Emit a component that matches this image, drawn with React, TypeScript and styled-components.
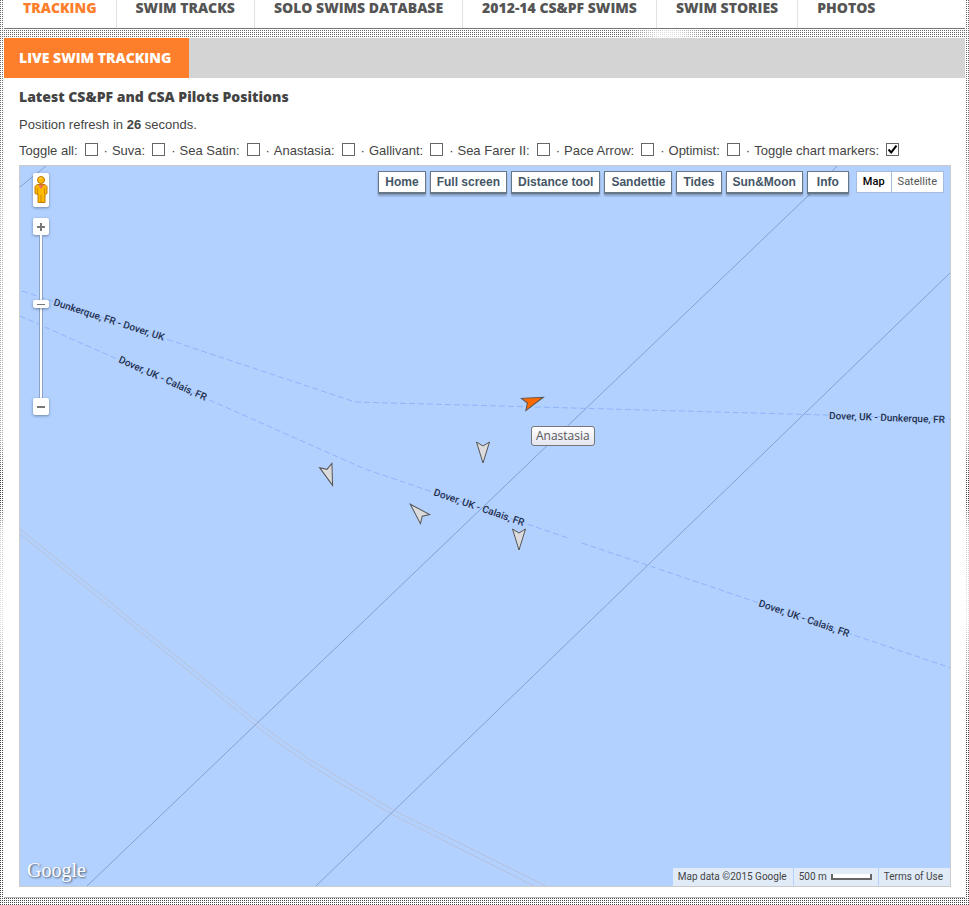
import React from "react";
import styled, { createGlobalStyle, css } from "styled-components";

const arial = `"Liberation Sans", Arial, sans-serif`;
const openSans = `"Open Sans", "Noto Sans", sans-serif`;
const roboto = `Roboto, Arial, sans-serif`;

const GlobalStyle = createGlobalStyle`
  *, *::before, *::after { box-sizing: border-box; }
  body {
    margin: 0;
    color: #444;
    font: 13px/20px ${arial};
    background-color: #fff;
    background-image:
      linear-gradient(90deg, transparent 1px, #fff 1px),
      linear-gradient(transparent 1px, #fff 1px),
      radial-gradient(40px 12px at 69% 34px, #ddd 30%, transparent),
      linear-gradient(#666 0, #777 150px, #bbb 210px, #aaa 440px, #444 480px, #444 500px, #ccc 530px, #e4e4e4 620px, #777 690px, #444 730px);
    background-size: 2px 2px, 2px 2px, 100% 100%, 100% 100%;
  }
`;

const Page = styled.div`
  min-height: 100vh;
  padding: 0 4px 7px;
`;

const Nav = styled.nav`
  display: flex;
  height: 29px;
  background: #fff;
  border-bottom: 1px solid #777;
`;

const NavLink = styled.a<{ $active?: boolean }>`
  padding: 0 19px;
  border-right: 1px solid #e2e2e2;
  color: ${(p) => (p.$active ? "#fd7e2b" : "#555")};
  font: 800 14px/16px ${openSans};
  text-decoration: none;
  white-space: nowrap;
  &:last-child { border-right: 0; }
`;

const Panel = styled.main`
  margin-top: 9px;
  padding-bottom: 10px;
  background: #fff;
  border-bottom: 1px solid #bbb;
`;

const TitleBar = styled.div`
  display: flex;
  background: #d4d4d4;
`;

const Title = styled.h1`
  margin: 0;
  padding: 0 18px 0 15px;
  background: #fd7e2b;
  color: #fff;
  font: 800 14px/40px ${openSans};
`;

const Content = styled.div`
  padding: 9px 14px 0 15px;
`;

const Heading = styled.h2`
  margin: 0;
  font: 800 14px/20px ${openSans};
`;

const Refresh = styled.p`
  margin: 8px 0 6px;
`;

const Toggles = styled.div`
  display: flex;
  padding-bottom: 4px;
  white-space: nowrap;
  height: 24px;
`;

const Toggle = styled.label`
  display: flex;
  align-items: center;
  & + &::before { content: "·"; margin: 0 4px 0 6px; }
`;

const Check = styled.input`
  appearance: none;
  width: 13px;
  height: 13px;
  margin: 0 0 4px 7px;
  border: 1px solid #666;
  background: #fff;
  &:checked {
    background: #fff url("data:image/svg+xml,%3Csvg xmlns='http://www.w3.org/2000/svg' viewBox='0 0 11 11'%3E%3Cpath d='M1.5 5.5 4.2 8.4 9.5 1.6' fill='none' stroke='%23000' stroke-width='2'/%3E%3C/svg%3E") center / 11px 11px no-repeat;
  }
`;

const MapFrame = styled.section`
  position: relative;
  height: calc(100vh - 183px);
  min-height: 420px;
  border: 1px solid #ccc;
  background: #b3d1ff;
  overflow: hidden;
`;

const Chart = styled.svg`
  position: absolute;
  top: 0;
  left: 0;
  display: block;
`;

const MapButtons = styled.div`
  position: absolute;
  top: 5px;
  right: 6px;
  display: flex;
  gap: 4px;
  align-items: flex-start;
`;

const MapButton = styled.button`
  min-width: 42px;
  height: 23px;
  padding: 0 6px;
  border: 1px solid #678;
  border-bottom-width: 2px;
  background: #fff;
  box-shadow: 0 2px 2px #0004;
  color: #445566;
  font: bold 12px/18px ${arial};
  white-space: nowrap;
`;

const MapTypes = styled.div`
  display: flex;
  margin-left: 3px;
`;

const MapType = styled.button<{ $active?: boolean }>`
  height: 22px;
  padding: 0 6px;
  border: 1px solid #a5bcdf;
  & + & { border-left: 0; }
  background: #fff;
  font: ${(p) => (p.$active ? 500 : 400)} 11px/20px ${roboto};
  color: ${(p) => (p.$active ? "#000" : "#555")};
`;

const raised = css`
  border: 0;
  border-radius: 2px;
  background: #fff;
  box-shadow: 0 1px 3px #3458;
`;

const MapControls = styled.div`
  position: absolute;
  top: 7px;
  left: 13px;
  display: flex;
  flex-direction: column;
  align-items: center;
`;

const Pegman = styled.button`
  ${raised}
  width: 16px;
  height: 34px;
  padding: 2px 0 0;
  margin-bottom: 11px;
  display: flex;
  justify-content: center;
`;

const Zoom = styled.button`
  ${raised}
  display: flex;
  align-items: center;
  justify-content: center;
  width: 16px;
  height: 17px;
  padding: 0;
`;

const Track = styled.div`
  display: flex;
  flex-direction: column;
  align-items: center;
  width: 4px;
  height: 163px;
  padding-top: 65px;
  background: #fff;
  border: 1px solid #8ba3c7;
  border-width: 0 1px;
`;

const Thumb = styled.button`
  ${raised}
  display: flex;
  align-items: center;
  justify-content: center;
  flex: none;
  width: 16px;
  height: 8px;
  padding: 0;
`;

const Tooltip = styled.div`
  position: absolute;
  top: 260px;
  left: 511px;
  padding: 0 4px;
  border: 1px solid #767676;
  border-radius: 3px;
  background: linear-gradient(#fff, #e4e5f0);
  color: #575757;
  font: 12px/18px ${openSans};
`;

const Logo = styled.a`
  position: absolute;
  left: 7px;
  bottom: 4px;
  color: #fff;
  font: 20px/24px "Liberation Serif", serif;
  text-decoration: none;
  text-shadow: 1px 1px 2px #456;
`;

const Legal = styled.footer`
  position: absolute;
  right: 0;
  bottom: 0;
  display: flex;
  gap: 1px;
  color: #444;
  font: 10px/18px ${roboto};
`;

const LegalItem = styled.div`
  display: flex;
  align-items: center;
  gap: 4px;
  padding: 0 6px 0 5px;
  background: #e1ebf8;
  &:last-child { padding-right: 7px; }
  a { color: inherit; text-decoration: none; }
`;

const ScaleBar = styled.span`
  width: 41px;
  height: 6px;
  border: solid #666;
  border-width: 0 2px 2px;
  background: #fff;
`;

const navItems = ["TRACKING", "SWIM TRACKS", "SOLO SWIMS DATABASE", "2012-14 CS&PF SWIMS", "SWIM STORIES", "PHOTOS"];
const toggles = ["Toggle all", "Suva", "Sea Satin", "Anastasia", "Gallivant", "Sea Farer II", "Pace Arrow", "Optimist", "Toggle chart markers"];
const buttons = ["Home", "Full screen", "Distance tool", "Sandettie", "Tides", "Sun&Moon", "Info"];

const routeLabels = [
  { text: "Dunkerque, FR - Dover, UK", x: 33, y: 139, angle: 18 },
  { text: "Dover, UK - Calais, FR", x: 98, y: 196, angle: 24 },
  { text: "Dover, UK - Calais, FR", x: 413, y: 329, angle: 19 },
  { text: "Dover, UK - Calais, FR", x: 738, y: 440, angle: 19 },
  { text: "Dover, UK - Dunkerque, FR", x: 809, y: 253, angle: 2 },
];

const boats = [
  { x: 463, y: 286, angle: 180, fill: "#dcdcdc" },
  { x: 499, y: 373, angle: 180, fill: "#dcdcdc" },
  { x: 309, y: 309, angle: 161, fill: "#dcdcdc" },
  { x: 398, y: 346, angle: -45, fill: "#dcdcdc" },
  { x: 513, y: 235, angle: 70, fill: "#ff6a00" },
];

function SeaChart() {
  return (
    <Chart width="931" height="720" viewBox="0 0 931 720" role="img" aria-label="Pilot boat positions in the Channel">
      <g fill="none" stroke="#b8c2d7" strokeWidth="1">
        <path d="M0 363 L225 546 Q265 579 313 608 L375 645 L526 720" />
        <path d="M0 368 L225 551 Q265 584 313 613 L375 650 L514 720" />
      </g>
      <g fill="none" stroke="#84a0cf" strokeWidth="1">
        <path d="M0 21 26 0M67 720 790 28 817 0M296 720 931 106" />
      </g>
      <g fill="none" stroke="#8fb4fb" strokeWidth="1" strokeDasharray="6 3">
        <path d="M2 125 335 236 805 249 931 253" />
        <path d="M0 150 345 303 548 372M562 377 931 502" />
      </g>
      <g fill="#223050" fontFamily="Roboto, Arial, sans-serif" fontSize="10" fontWeight="500" stroke="#b3d1ff" strokeWidth="1" paintOrder="stroke">
        {routeLabels.map((l) => (
          <text key={l.x} transform={`translate(${l.x} ${l.y}) rotate(${l.angle})`}>{l.text}</text>
        ))}
      </g>
      {boats.map((b) => (
        <path
          key={b.x}
          d="M0-11 6.500 10 0 6-6.500 10Z"
          transform={`translate(${b.x} ${b.y}) rotate(${b.angle})`}
          fill={b.fill}
          stroke="#555"
        />
      ))}
    </Chart>
  );
}

function PegmanIcon() {
  return (
    <svg width="14" height="29" viewBox="0 0 14 29">
      <g fill="#fbb900" stroke="#c17a08" strokeWidth="1">
        <path d="M3 9.500h8l2 2v7l-2 1v8H4v-8l-3-1v-7z" />
        <circle cx="7" cy="5" r="3.500" />
      </g>
      <path d="M4 10h6l-3 4z" fill="#f26d5b" />
      <path d="M7 20v7M3.500 13v6M10.500 13v6" stroke="#d28c08" />
      <path d="M5 4.500q1-2 3-1.500" stroke="#ffe28a" fill="none" />
    </svg>
  );
}

export default function App() {
  return (
    <>
      <GlobalStyle />
      <Page>
        <Nav>
          {navItems.map((item, i) => (
            <NavLink key={item} href="#" $active={i === 0}>{item}</NavLink>
          ))}
        </Nav>
        <Panel>
          <TitleBar><Title>LIVE SWIM TRACKING</Title></TitleBar>
          <Content>
            <Heading>Latest CS&amp;PF and CSA Pilots Positions</Heading>
            <Refresh>Position refresh in <b>26</b> seconds.</Refresh>
            <Toggles>
              {toggles.map((name) => (
                <Toggle key={name}>
                  {name}:
                  <Check type="checkbox" defaultChecked={name === "Toggle chart markers"} />
                </Toggle>
              ))}
            </Toggles>
            <MapFrame>
              <SeaChart />
              <MapControls>
                <Pegman aria-label="Street View"><PegmanIcon /></Pegman>
                <Zoom aria-label="Zoom in">
                  <svg width="8" height="8" stroke="#777" strokeWidth="2"><path d="M4 0v8M0 4h8" /></svg>
                </Zoom>
                <Track>
                  <Thumb aria-label="Zoom level">
                    <svg width="8" height="1"><path d="M0 .5h8" stroke="#777" /></svg>
                  </Thumb>
                </Track>
                <Zoom aria-label="Zoom out">
                  <svg width="8" height="2"><path d="M0 1h8" stroke="#777" strokeWidth="2" /></svg>
                </Zoom>
              </MapControls>
              <MapButtons>
                {buttons.map((b) => <MapButton key={b}>{b}</MapButton>)}
                <MapTypes>
                  <MapType $active>Map</MapType>
                  <MapType>Satellite</MapType>
                </MapTypes>
              </MapButtons>
              <Tooltip role="tooltip">Anastasia</Tooltip>
              <Logo href="#">Google</Logo>
              <Legal>
                <LegalItem>Map data ©2015 Google</LegalItem>
                <LegalItem>500 m <ScaleBar /></LegalItem>
                <LegalItem><a href="#">Terms of Use</a></LegalItem>
              </Legal>
            </MapFrame>
          </Content>
        </Panel>
      </Page>
    </>
  );
}
